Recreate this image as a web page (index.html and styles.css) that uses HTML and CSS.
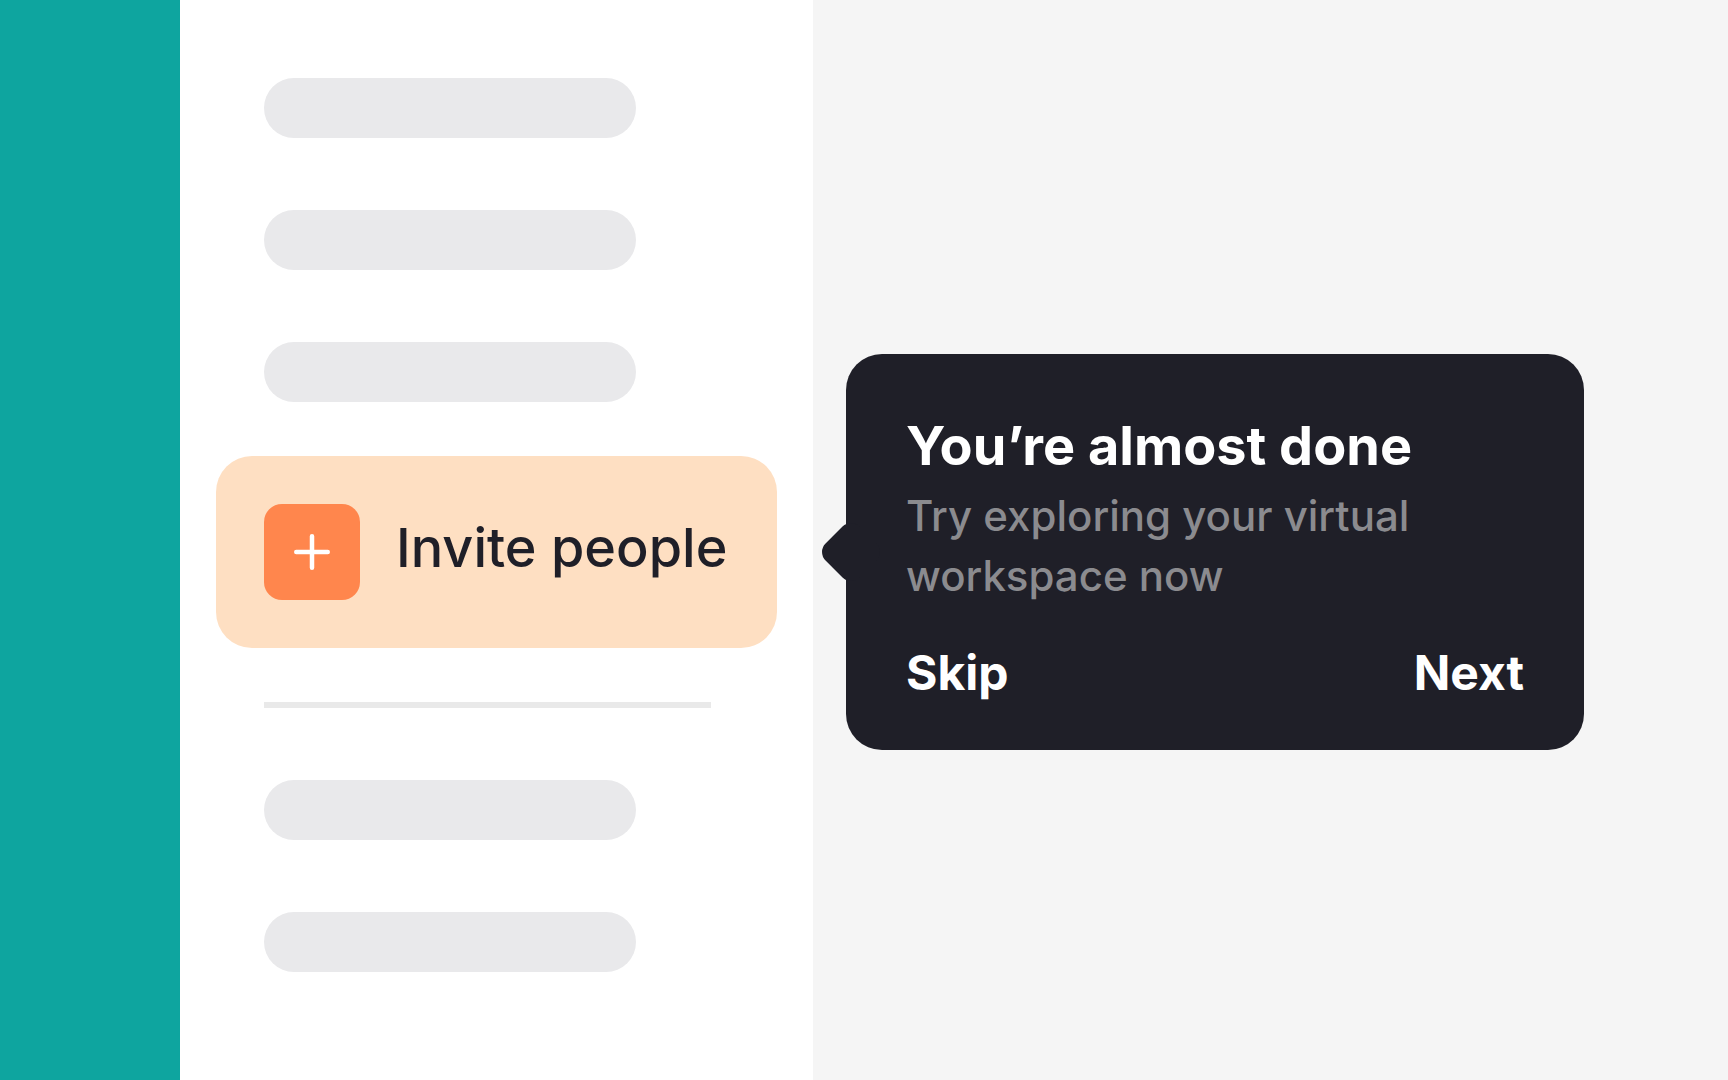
FILE: index.html
```html
<!DOCTYPE html>
<html lang="en">
<head>
  <meta charset="UTF-8">
  <meta name="viewport" content="width=device-width, initial-scale=1.0">
  <title>Invite people</title>
  <link rel="stylesheet" href="styles.css">
</head>
<body>
  <div class="app">
    <div class="rail"></div>

    <nav class="sidebar">
      <div class="group">
        <div class="placeholder"></div>
        <div class="placeholder"></div>
        <div class="placeholder"></div>
      </div>

      <div class="invite-wrap">
        <button class="invite" type="button" aria-describedby="tour-title">
          <span class="invite-icon">
            <svg width="36" height="36" viewBox="0 0 36 36" fill="none" stroke="#fff" stroke-width="4.5" stroke-linecap="round" aria-hidden="true">
              <path d="M18 2.25v31.5M2.25 18h31.5"/>
            </svg>
          </span>
          <span class="invite-label">Invite people</span>
        </button>

        <!-- Onboarding tooltip -->
        <div class="tooltip" role="dialog" aria-labelledby="tour-title">
          <h2 id="tour-title">You’re almost done</h2>
          <p>Try exploring your virtual workspace now</p>
          <div class="tooltip-actions">
            <button type="button">Skip</button>
            <button type="button">Next</button>
          </div>
        </div>
      </div>

      <div class="group">
        <hr class="divider">
        <div class="placeholder"></div>
        <div class="placeholder"></div>
      </div>
    </nav>

    <main class="content"></main>
  </div>
</body>
</html>
```
FILE: styles.css
```css
* {
  box-sizing: border-box;
}

body {
  margin: 0;
  font-family: Inter, sans-serif;
  color: #1f1f28;
  background: #f5f5f5;
}

button {
  font-family: inherit;
  border: none;
  cursor: pointer;
}

.app {
  display: flex;
  min-height: 100vh;
}

.rail {
  flex: 0 0 180px;
  background: #0ea59f;
}

.sidebar {
  flex: 0 0 633px;
  display: flex;
  flex-direction: column;
  gap: 54px;
  padding: 78px 36px;
  background: #fff;
}

.content {
  flex: 1;
}

.group {
  display: flex;
  flex-direction: column;
  gap: 72px;
  padding: 0 66px 0 48px;
}

.placeholder {
  width: 372px;
  height: 60px;
  border-radius: 30px;
  background: #e9e9eb;
}

.divider {
  width: 100%;
  height: 6px;
  margin: 0;
  border: none;
  background: #e9e9e9;
}

.invite-wrap {
  position: relative;
}

.invite {
  display: flex;
  align-items: center;
  gap: 36px;
  width: 100%;
  padding: 48px;
  border-radius: 36px;
  background: #fedfc2;
  color: inherit;
  white-space: nowrap;
}

.invite-icon {
  flex: none;
  display: flex;
  align-items: center;
  justify-content: center;
  width: 96px;
  height: 96px;
  border-radius: 18px;
  background: #ff864d;
}

.invite-label {
  padding-bottom: 9px;
  font-size: 54px;
  font-weight: 500;
  line-height: 72px;
}

.tooltip {
  position: absolute;
  top: 50%;
  left: 100%;
  width: 738px;
  margin-left: 69px;
  padding: 60px 60px 46px;
  border-radius: 36px;
  background: #1f1f28;
  transform: translateY(-50%);
}

/* arrow pointing at the invite row */
.tooltip::before {
  content: '';
  position: absolute;
  top: 50%;
  left: -19px;
  width: 48px;
  height: 48px;
  border-radius: 12px;
  background: #1f1f28;
  transform: translateY(-50%) rotate(45deg);
}

.tooltip h2 {
  position: relative;
  margin: 0 0 9px;
  font-size: 54px;
  font-weight: 700;
  line-height: 63px;
  color: #fff;
}

.tooltip p {
  position: relative;
  margin: 0 0 36px;
  font-size: 42px;
  font-weight: 500;
  line-height: 60px;
  color: #8b8b8f;
}

.tooltip-actions {
  display: flex;
  justify-content: space-between;
}

.tooltip-actions button {
  padding: 0;
  font-size: 48px;
  font-weight: 700;
  line-height: 62px;
  color: #fff;
  background: none;
}
```
